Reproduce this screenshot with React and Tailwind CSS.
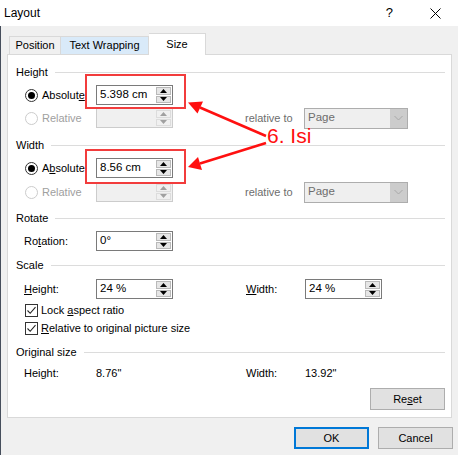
import React from "react";

function Tri({ up, disabled }) {
  const c = disabled ? "#a0a0a0" : "#000";
  return (
    <svg width="7" height="4" viewBox="0 0 7 4">
      {up ? <path d="M0 4 L3.5 0 L7 4Z" fill={c} /> : <path d="M0 0 L3.5 4 L7 0Z" fill={c} />}
    </svg>
  );
}

function SpinInput({ value, disabled }) {
  return (
    <div
      className={`flex h-[20px] w-[77px] shrink-0 items-stretch border ${
        disabled ? "border-[#cccccc] bg-[#f0f0f0]" : "border-[#7a7a7a] bg-white"
      }`}
    >
      <div className="flex flex-1 items-center pl-[3px] text-[11.5px]">{value}</div>
      <div className="flex w-[16px] flex-col gap-[1px] py-[1px] pr-[1px]">
        <div
          className={`flex flex-1 items-center justify-center border ${
            disabled ? "border-[#dcdcdc] bg-[#f0f0f0]" : "border-[#b9b9b9] bg-[#e6e6e6]"
          }`}
        >
          <Tri up disabled={disabled} />
        </div>
        <div
          className={`flex flex-1 items-center justify-center border ${
            disabled ? "border-[#dcdcdc] bg-[#f0f0f0]" : "border-[#b9b9b9] bg-[#e6e6e6]"
          }`}
        >
          <Tri disabled={disabled} />
        </div>
      </div>
    </div>
  );
}

function Radio({ checked, disabled }) {
  return (
    <div
      className={`flex h-[13px] w-[13px] shrink-0 items-center justify-center rounded-full border bg-white ${
        disabled ? "border-[#cccccc]" : "border-[#333333]"
      }`}
    >
      {checked && <div className="h-[7px] w-[7px] rounded-full bg-[#000]" />}
    </div>
  );
}

function Check() {
  return (
    <div className="flex h-[13px] w-[13px] shrink-0 items-center justify-center border border-[#333333] bg-white">
      <svg width="11" height="11" viewBox="0 0 11 11">
        <path d="M1.5 5.5 L4.2 8.3 L9.5 2.2" fill="none" stroke="#222" strokeWidth="1.1" />
      </svg>
    </div>
  );
}

function Dropdown() {
  return (
    <div className="flex h-[21px] w-[104px] shrink-0 items-stretch border border-[#adadad] bg-[#efefef]">
      <div className="flex flex-1 items-center pl-[3px] text-[11.5px] text-[#6d6d6d]">Page</div>
      <div className="flex w-[17px] items-center justify-center bg-[#cccccc]">
        <svg width="9" height="6" viewBox="0 0 9 6">
          <path d="M0.5 1 L4.5 5 L8.5 1" fill="none" stroke="#a8a8a8" strokeWidth="1" />
        </svg>
      </div>
    </div>
  );
}

function Header({ children, mt }) {
  return (
    <div className={`flex h-[14px] items-center pl-[8px] pr-[6px] ${mt}`}>
      <span className="leading-none">{children}</span>
      <div className="ml-[7px] h-px flex-1 bg-[#dcdcdc]" />
    </div>
  );
}

function RadioRow({ label, checked, disabled, value, mt, relTo }) {
  return (
    <div className={`flex h-[20px] items-center pl-[17px] ${mt}`}>
      <div className="flex w-[71px] shrink-0 items-center gap-[4px]">
        <Radio checked={checked} disabled={disabled} />
        <span className={disabled ? "text-[#a0a0a0]" : "text-black"}>{label}</span>
      </div>
      <SpinInput value={value} disabled={disabled} />
      {relTo && (
        <>
          <span className="ml-[72px] w-[59px] shrink-0 text-[#6d6d6d]">relative to</span>
          <Dropdown />
        </>
      )}
    </div>
  );
}

function Btn({ children, primary, cls }) {
  return (
    <div
      className={`flex h-[22px] w-[75px] items-center justify-center bg-[#e1e1e1] ${
        primary ? "border-2 border-[#0078d7]" : "border border-[#adadad]"
      } ${cls || ""}`}
    >
      {children}
    </div>
  );
}

export default function App() {
  return (
    <div className="relative h-[455px] w-[458px] overflow-hidden bg-[#f0f0f0] font-['Liberation_Sans',sans-serif] text-[11px] text-black">
      {/* Title bar */}
      <div className="flex h-[26px] items-center bg-white">
        <span className="ml-[4px] text-[12px]">Layout</span>
        <span className="ml-auto mr-[37px] text-[13px]">?</span>
        <svg className="mr-[17px]" width="11" height="11" viewBox="0 0 11 11">
          <path d="M0.5 0.5 L10.5 10.5 M10.5 0.5 L0.5 10.5" stroke="#000" strokeWidth="1" />
        </svg>
      </div>

      {/* Body */}
      <div className="flex h-[429px] flex-col border-l border-[#464e5c] pl-[6px] pt-[7px]">
        {/* Tabs */}
        <div className="relative z-10 ml-[2px] flex items-end">
          <div className="flex h-[18px] w-[52px] items-center justify-center border border-b-0 border-[#d9d9d9] bg-[#f0f0f0]">
            Position
          </div>
          <div className="flex h-[18px] w-[88px] items-center justify-center border border-b-0 border-l-0 border-[#d9d9d9] bg-[#d9eaf9]">
            Text Wrapping
          </div>
          <div className="-mb-px flex h-[22px] w-[57px] items-center justify-center border border-b-0 border-l-0 border-[#d9d9d9] bg-white pb-[1px]">
            Size
          </div>
        </div>

        {/* Panel */}
        <div className="flex h-[364px] w-[445px] flex-col border border-[#d9d9d9] bg-white">
          <Header mt="mt-[10px]">Height</Header>
          <RadioRow
            mt="mt-[6px]"
            checked
            value="5.398 cm"
            label={
              <>
                Absolut<span className="underline">e</span>
              </>
            }
          />
          <RadioRow mt="mt-[3px]" disabled value="" label="Relative" relTo />

          <Header mt="mt-[10px]">Width</Header>
          <RadioRow
            mt="mt-[6px]"
            checked
            value="8.56 cm"
            label={
              <>
                A<span className="underline">b</span>solute
              </>
            }
          />
          <RadioRow mt="mt-[4px]" disabled value="" label="Relative" relTo />

          <Header mt="mt-[9px]">Rotate</Header>
          <div className="mt-[6px] flex h-[20px] items-center pl-[16px]">
            <span className="w-[72px] shrink-0">
              Ro<span className="underline">t</span>ation:
            </span>
            <SpinInput value="0°" />
          </div>

          <Header mt="mt-[7px]">Scale</Header>
          <div className="mt-[7px] flex h-[20px] items-center pl-[16px]">
            <span className="w-[72px] shrink-0">
              <span className="underline">H</span>eight:
            </span>
            <SpinInput value="24 %" />
            <span className="ml-[73px] w-[59px] shrink-0">
              <span className="underline">W</span>idth:
            </span>
            <SpinInput value="24 %" />
          </div>
          <div className="mt-[4px] flex h-[14px] items-center gap-[3px] pl-[17px]">
            <Check />
            <span>
              Lock <span className="underline">a</span>spect ratio
            </span>
          </div>
          <div className="mt-[4px] flex h-[14px] items-center gap-[3px] pl-[17px]">
            <Check />
            <span>
              <span className="underline">R</span>elative to original picture size
            </span>
          </div>

          <Header mt="mt-[10px]">Original size</Header>
          <div className="mt-[7px] flex h-[14px] items-center pl-[16px]">
            <span className="w-[72px] shrink-0">Height:</span>
            <span className="w-[77px] shrink-0">8.76"</span>
            <span className="ml-[73px] w-[59px] shrink-0">Width:</span>
            <span>13.92"</span>
          </div>
          <div className="mt-[8px] flex justify-end pr-[6px]">
            <Btn cls="h-[21px]">
              Re<span className="underline">s</span>et
            </Btn>
          </div>
        </div>

        {/* Bottom buttons */}
        <div className="mt-[9px] flex justify-end gap-[9px] pr-[5px]">
          <Btn primary>OK</Btn>
          <Btn>Cancel</Btn>
        </div>
      </div>

      {/* Red annotations */}
      <div className="pointer-events-none absolute left-[85px] top-[74px] h-[35px] w-[101px] border-2 border-[#f23c3c]" />
      <div className="pointer-events-none absolute left-[85px] top-[149px] h-[35px] w-[101px] border-2 border-[#f23c3c]" />
      <svg className="pointer-events-none absolute left-0 top-0" width="458" height="455" viewBox="0 0 458 455">
        <line x1="266" y1="136" x2="200" y2="107.5" stroke="#ff1010" strokeWidth="2.5" />
        <path d="M188 102.5 L203 101.5 L197.5 113.5 Z" fill="#ff1010" />
        <line x1="266" y1="143" x2="200" y2="163.5" stroke="#ff1010" strokeWidth="2.5" />
        <path d="M188 167 L198 157 L202 170 Z" fill="#ff1010" />
      </svg>
      <div className="pointer-events-none absolute left-[267px] top-[125px] text-[21px] leading-none text-[#ff1010]">
        6. Isi
      </div>
    </div>
  );
}
